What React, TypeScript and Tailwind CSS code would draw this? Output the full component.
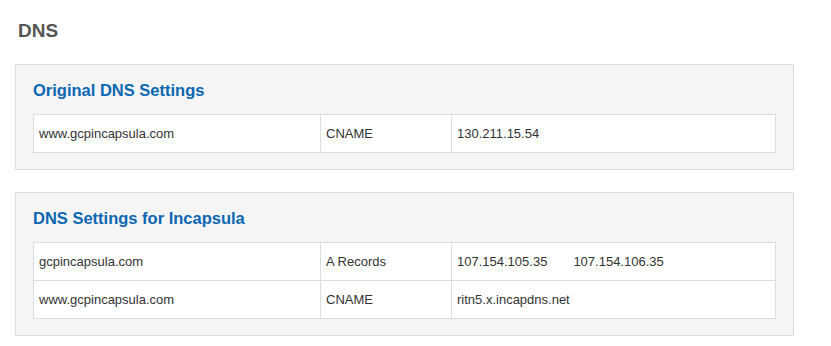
import React from "react";

type DnsRow = {
  host: string;
  type: string;
  values: string[];
};

const original: DnsRow[] = [
  { host: "www.gcpincapsula.com", type: "CNAME", values: ["130.211.15.54"] },
];

const incapsula: DnsRow[] = [
  { host: "gcpincapsula.com", type: "A Records", values: ["107.154.105.35", "107.154.106.35"] },
  { host: "www.gcpincapsula.com", type: "CNAME", values: ["ritn5.x.incapdns.net"] },
];

const DnsTable = ({ rows }: { rows: DnsRow[] }) => (
  <div className="border border-[#dddddd] bg-white">
    {rows.map((row, i) => (
      <div
        key={row.host + row.type}
        className={`grid grid-cols-[286px_131px_1fr] ${i > 0 ? "h-[38px] border-t border-[#dddddd]" : "h-[37px]"}`}
      >
        <div className="flex items-center pl-[5px]">{row.host}</div>
        <div className="flex items-center pl-[5px] border-l border-[#dddddd]">{row.type}</div>
        <div className="flex items-center pl-[5px] border-l border-[#dddddd]">
          {row.values.map((v) => (
            <span key={v} className="mr-[26px]">
              {v}
            </span>
          ))}
        </div>
      </div>
    ))}
  </div>
);

const Panel = ({ title, rows, className = "" }: { title: string; rows: DnsRow[]; className?: string }) => (
  <div className={`w-[779px] border border-[#dddddd] bg-[#f5f5f5] px-[17px] pt-[15px] pb-[16px] ${className}`}>
    <h3 className="text-[16.5px] leading-[20px] font-bold text-[#0b67b2] mb-[14px]">{title}</h3>
    <DnsTable rows={rows} />
  </div>
);

export default function App() {
  return (
    <div
      className="min-h-screen bg-white pl-[15px] pt-[19px] text-[13px] text-[#333333]"
      style={{ fontFamily: '"Liberation Sans", Arial, sans-serif' }}
    >
      <h2 className="pl-[3px] text-[19px] leading-[24px] font-bold text-[#555555] mb-[21px]">DNS</h2>
      <Panel title="Original DNS Settings" rows={original} />
      <Panel title="DNS Settings for Incapsula" rows={incapsula} className="mt-[22px]" />
    </div>
  );
}
